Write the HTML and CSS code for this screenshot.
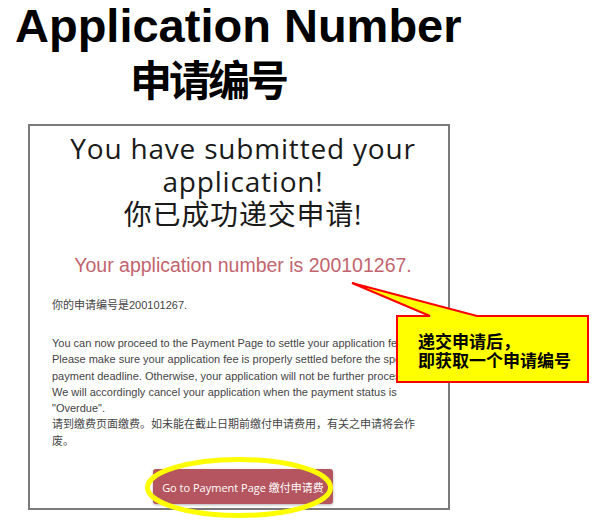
FILE: index.html
```html
<!DOCTYPE html>
<html lang="zh-CN">
<head>
    <meta charset="UTF-8">
    <meta name="viewport" content="width=device-width, initial-scale=1.0">
    <title>Application Number</title>
    <link rel="stylesheet" href="styles.css">
</head>
<body>
    <div class="page">
        <h1 class="doc-title">
            <span class="title-en">Application Number</span>
            <span class="title-zh">申请编号</span>
        </h1>

        <div class="shot">
            <h2 class="done">You have submitted your<br>application!<br>你已成功递交申请!</h2>
            <p class="app-no">Your application number is 200101267.</p>
            <p class="note">你的申请编号是200101267.</p>
            <p class="note note-long">You can now proceed to the Payment Page to settle your application fee.<br>Please make sure your application fee is properly settled before the specified<br>payment deadline. Otherwise, your application will not be further processed.<br>We will accordingly cancel your application when the payment status is<br>"Overdue".<br>请到缴费页面缴费。如未能在截止日期前缴付申请费用，有关之申请将会作<br>废。</p>
            <div class="actions">
                <button type="button" class="btn-pay">Go to Payment Page 缴付申请费</button>
            </div>
        </div>

        <!-- annotations drawn over the screenshot -->
        <div class="callout">
            <svg width="240" height="104" viewBox="0 0 240 104">
                <path d="M47 36 L80 36 L2 3 L127 36 L238 36 L238 102 L47 102 Z" fill="#ffff00" stroke="#ff0000" stroke-width="2" stroke-linejoin="miter"/>
            </svg>
            <p class="callout-text">递交申请后，<br>即获取一个申请编号</p>
        </div>
        <svg class="ring" width="192" height="66" viewBox="0 0 192 66">
            <ellipse cx="96" cy="32.5" rx="91.5" ry="28" fill="none" stroke="#ffff00" stroke-width="5"/>
        </svg>
    </div>
</body>
</html>
```

FILE: styles.css
```css
/* Geral */
body {
    margin: 0;
    padding: 0;
    background: #fff;
    font-family: "Liberation Sans", Arial, sans-serif;
}

.page {
    position: relative;
    width: 601px;
    height: 529px;
    overflow: hidden;
}

/* Titulo do documento */
.doc-title {
    margin: 0;
    padding-top: 2px;
    font-weight: bold;
    color: #000;
}

.title-en {
    display: block;
    padding-left: 15px;
    font-family: "Liberation Sans", Arial, sans-serif;
    font-size: 47px;
    line-height: 47px;
}

.title-zh {
    display: block;
    margin-top: 5px;
    padding-left: 130px;
    font-family: "Noto Sans CJK SC", sans-serif;
    font-size: 42px;
    letter-spacing: -3px;
    line-height: 48px;
}

/* Captura da pagina */
.shot {
    box-sizing: border-box;
    margin: 22px 0 0 28px;
    width: 422px;
    height: 386px;
    padding: 6px 14px 3px 22px;
    border: 2px solid #7a7a7a;
}

.done {
    margin: 0;
    font-family: "Open Sans", "Noto Sans CJK SC", sans-serif;
    font-weight: 400;
    font-size: 28px;
    letter-spacing: 0.8px;
    line-height: 33px;
    text-align: center;
    color: #1a1a1a;
}

.app-no {
    margin: 22px 0 0;
    font-size: 19.5px;
    line-height: 24px;
    text-align: center;
    color: #c2646e;
}

.note {
    margin: 20px 0 0;
    font-family: "Liberation Sans", "Noto Sans CJK SC", sans-serif;
    font-size: 11px;
    line-height: 16px;
    color: #444;
    white-space: nowrap;
}

.note-long {
    margin-top: 22px;
    line-height: 16.3px;
}

.actions {
    display: flex;
    justify-content: center;
    margin-top: 20px;
}

.btn-pay {
    width: 180px;
    height: 35px;
    padding: 0;
    border: none;
    border-radius: 3px;
    background-color: #b5555f;
    box-shadow: 0 1px 3px rgba(0, 0, 0, 0.3);
    color: #fff;
    font-family: "Open Sans", "Noto Sans CJK SC", sans-serif;
    font-size: 11px;
}

/* Anotacoes */
.callout {
    position: absolute;
    left: 350px;
    top: 280px;
    width: 240px;
    height: 104px;
}

.callout svg {
    display: block;
}

.callout-text {
    position: absolute;
    left: 68px;
    top: 51px;
    margin: 0;
    font-family: "Noto Sans CJK SC", sans-serif;
    font-weight: bold;
    font-size: 17px;
    line-height: 19px;
    color: #000;
}

.ring {
    position: absolute;
    left: 143px;
    top: 455px;
}
```
